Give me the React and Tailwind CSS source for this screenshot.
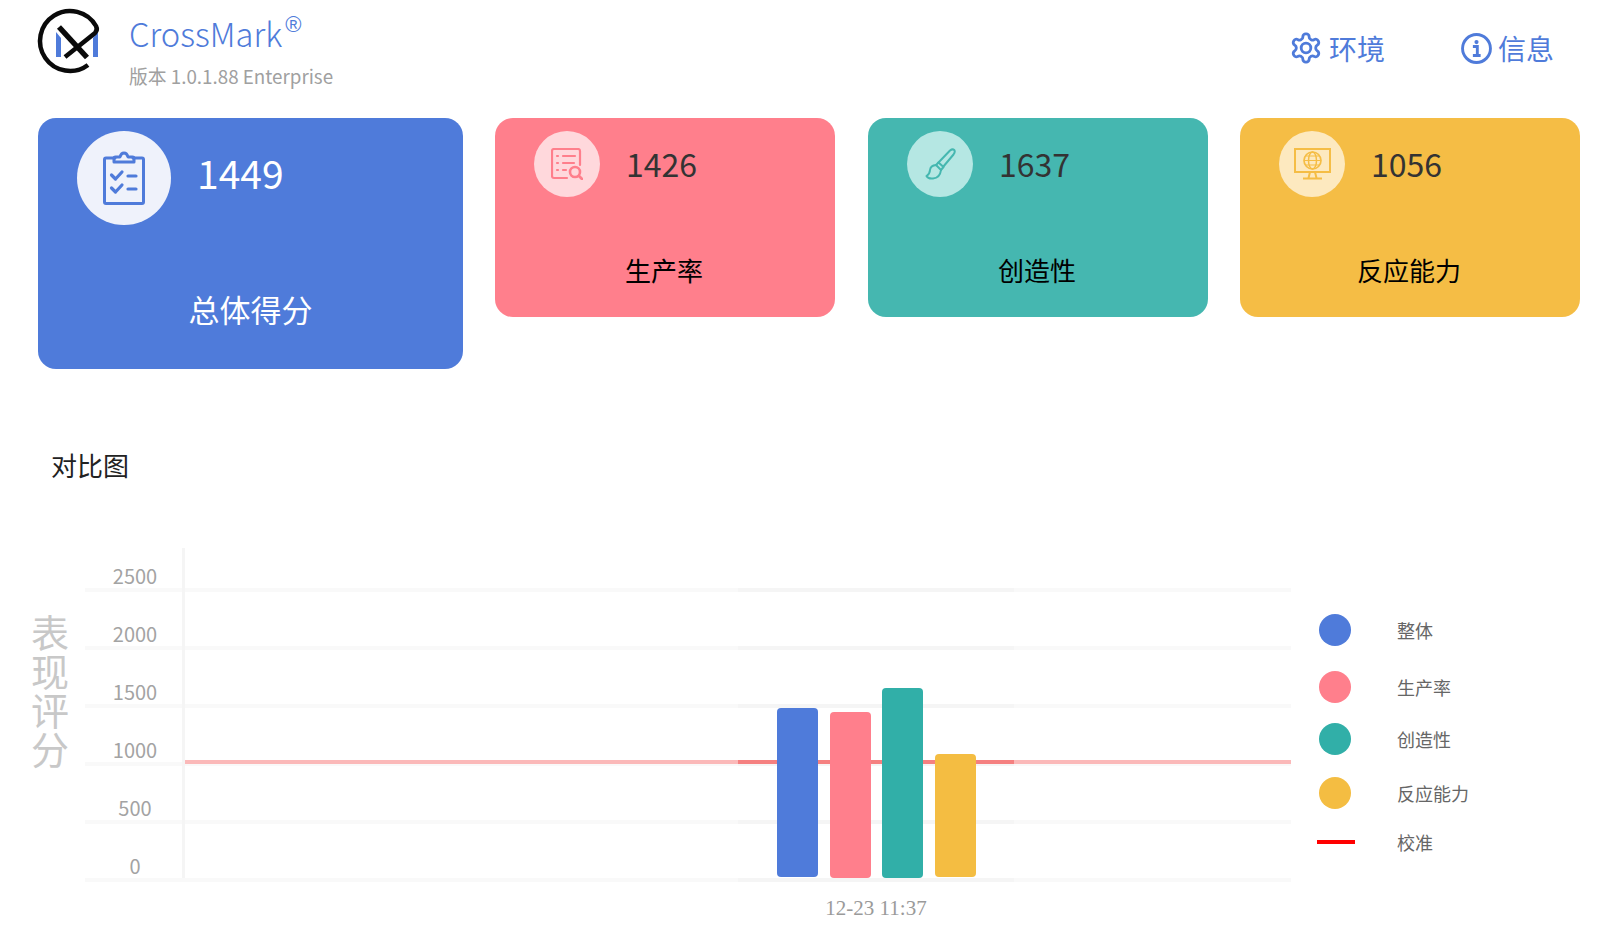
import React from "react";

const cjk = { fontFamily: '"Noto Sans CJK SC", "Noto Sans", sans-serif' };

function Logo() {
  return (
    <svg width="80" height="80" viewBox="30 0 80 80" className="shrink-0">
      <path d="M56 32 L61 38 V57 H56 Z" fill="#4f7bda" />
      <path d="M98 32 L93 38 V57 H98 Z" fill="#4f7bda" />
      <path d="M88 65 A30 30 0 1 1 96 26 Q98 30 95 33 L65 57" fill="none" stroke="#0a0a0a" strokeWidth="4.5" />
      <path d="M59 27 L87 57.5" fill="none" stroke="#0a0a0a" strokeWidth="5.5" />
    </svg>
  );
}

function Gear() {
  return (
    <svg width="34" height="34" viewBox="0 0 24 24" fill="none" stroke="#4f7bda" strokeWidth="2" strokeLinecap="round" strokeLinejoin="round">
      <path d="M12.22 2h-.44a2 2 0 0 0-2 2v.18a2 2 0 0 1-1 1.73l-.43.25a2 2 0 0 1-2 0l-.15-.08a2 2 0 0 0-2.73.73l-.22.38a2 2 0 0 0 .73 2.73l.15.1a2 2 0 0 1 1 1.72v.51a2 2 0 0 1-1 1.74l-.15.09a2 2 0 0 0-.73 2.73l.22.38a2 2 0 0 0 2.73.73l.15-.08a2 2 0 0 1 2 0l.43.25a2 2 0 0 1 1 1.73V20a2 2 0 0 0 2 2h.44a2 2 0 0 0 2-2v-.18a2 2 0 0 1 1-1.73l.43-.25a2 2 0 0 1 2 0l.15.08a2 2 0 0 0 2.73-.73l.22-.39a2 2 0 0 0-.73-2.73l-.15-.08a2 2 0 0 1-1-1.74v-.5a2 2 0 0 1 1-1.74l.15-.09a2 2 0 0 0 .73-2.73l-.22-.38a2 2 0 0 0-2.73-.73l-.15.08a2 2 0 0 1-2 0l-.43-.25a2 2 0 0 1-1-1.73V4a2 2 0 0 0-2-2z" />
      <circle cx="12" cy="12" r="3.4" />
    </svg>
  );
}

function InfoIcon() {
  return (
    <svg width="31" height="31" viewBox="0 0 30 30" fill="none" stroke="#4f7bda">
      <circle cx="15" cy="15" r="13.5" strokeWidth="2.8" />
      <circle cx="15" cy="8.8" r="2" fill="#4f7bda" stroke="none" />
      <path d="M11.5 13 H15.8 V21.5 M11.5 21.8 H19" strokeWidth="2.8" />
    </svg>
  );
}

function ClipboardIcon() {
  return (
    <svg width="42" height="54" viewBox="0 0 42 54" fill="none" stroke="#4f7bda" strokeWidth="3" strokeLinecap="round" strokeLinejoin="round">
      <path d="M12 7 H3 Q1.5 7 1.5 8.5 V51 Q1.5 52.5 3 52.5 H39 Q40.5 52.5 40.5 51 V8.5 Q40.5 7 39 7 H30" />
      <path d="M11 11 V7.5 Q11 6 12.5 6 H17 Q18 2 21 2 Q24 2 25 6 H29.5 Q31 6 31 7.5 V11 Z" />
      <path d="M8.5 24 L12.5 28 L19 21 M8.5 37 L12.5 41 L19 34" strokeWidth="3.2" />
      <path d="M25 25 H33 M25 38 H33" strokeWidth="3.2" />
    </svg>
  );
}

function ListSearchIcon() {
  return (
    <svg width="32" height="32" viewBox="0 0 32 32" fill="none" stroke="#ff7f8c" strokeWidth="2.2" strokeLinecap="round" strokeLinejoin="round">
      <path d="M16 30 H3 Q1 30 1 28 V3 Q1 1 3 1 H27 Q29 1 29 3 V17" />
      <path d="M6 8 H7 M6 15 H7 M6 22 H7 M12 8 H24 M12 15 H23 M12 22 H15" strokeWidth="2.2" />
      <circle cx="24" cy="24" r="5" strokeWidth="2.6" />
      <path d="M28 28 L31 31" strokeWidth="2.8" />
    </svg>
  );
}

function BrushIcon() {
  return (
    <svg width="31" height="32" viewBox="0 0 31 32" fill="none" stroke="#45b7b0" strokeWidth="2" strokeLinecap="round" strokeLinejoin="round">
      <path d="M13 15 L25 2.5 Q27.5 0.5 29.3 2 Q30.5 4 28.5 6.5 L18 19" />
      <path d="M11 17 L13.5 14.5 L18.5 19 L16 22" />
      <path d="M11 17 Q5.5 17.5 5 22 Q4.8 26 1.5 28 Q3 31 8 30.5 Q15 30 16 22 Z" />
    </svg>
  );
}

function MonitorIcon() {
  return (
    <svg width="37" height="32" viewBox="0 0 37 32" fill="none" stroke="#f5bd45" strokeWidth="2">
      <rect x="1" y="1" width="35" height="23" />
      <circle cx="18.5" cy="12.5" r="8.5" strokeWidth="1.7" />
      <ellipse cx="18.5" cy="12.5" rx="4" ry="8.5" strokeWidth="1.5" />
      <path d="M10 12.5 H27 M12 8 H25 M12 17 H25" strokeWidth="1.2" />
      <path d="M16 24 L14.5 30 M21 24 L22.5 30 M9 30.5 H28" />
    </svg>
  );
}

const smallCards = [
  { num: "1426", label: "生产率", bg: "bg-[#ff7f8c]", circle: "bg-[#ffd8dc]", icon: <ListSearchIcon />, gap: "ml-0" },
  { num: "1637", label: "创造性", bg: "bg-[#45b7b0]", circle: "bg-[#b5e7e3]", icon: <BrushIcon />, gap: "ml-[1px]" },
  { num: "1056", label: "反应能力", bg: "bg-[#f5bd45]", circle: "bg-[#fde9bf]", icon: <MonitorIcon />, gap: "ml-0" },
];

const legend = [
  { label: "整体", cls: "bg-[#4f7bda]", row: "mt-0" },
  { label: "生产率", cls: "bg-[#ff7f8c]", row: "mt-[25px]" },
  { label: "创造性", cls: "bg-[#31afa8]", row: "mt-[20px]" },
  { label: "反应能力", cls: "bg-[#f4bd42]", row: "mt-[22px]" },
];

function Chart() {
  const ticks = [
    { y: 590, t: "2500" },
    { y: 648, t: "2000" },
    { y: 706, t: "1500" },
    { y: 764, t: "1000" },
    { y: 822, t: "500" },
    { y: 880, t: "0" },
  ];
  const bars = [
    { x: 777, y: 708, h: 169, c: "#4f7bda" },
    { x: 830, y: 712, h: 166, c: "#ff7f8c" },
    { x: 882, y: 688, h: 190, c: "#31afa8" },
    { x: 935, y: 754, h: 123, c: "#f4bd42" },
  ];
  return (
    <svg width="1220" height="400" viewBox="80 540 1220 400" className="shrink-0" style={cjk}>
      {ticks.map((k) => (
        <g key={k.y}>
          <rect x="85" y={k.y - 2} width="1206" height="4" fill="#f9f9f9" />
          <rect x="738" y={k.y - 2} width="276" height="4" fill="#f5f5f5" />
          <text x="135" y={k.y - 6} textAnchor="middle" fontSize="20" fill="#a3a3a3">{k.t}</text>
        </g>
      ))}
      <rect x="182" y="548" width="3" height="330" fill="#f5f5f5" />
      <rect x="185" y="760" width="1106" height="4" fill="#fbb9b9" />
      <rect x="738" y="760" width="276" height="4" fill="#f58080" />
      {bars.map((b) => (
        <rect key={b.x} x={b.x} y={b.y} width="41" height={b.h} rx="4" fill={b.c} />
      ))}
      <text x="876" y="915" textAnchor="middle" fontSize="21" fontFamily='"Liberation Serif", serif' fill="#9a9a9a">12-23 11:37</text>
    </svg>
  );
}

export default function App() {
  return (
    <div className="w-[1618px] h-[947px] bg-white overflow-hidden" style={cjk}>
      <header className="flex items-start h-[118px] pl-[30px]">
        <Logo />
        <div className="ml-[19px] pt-[10px] flex flex-col">
          <div className="text-[32.7px] leading-[46px] text-[#4f7bda] font-light">CrossMark<sup className="font-['Liberation_Sans'] text-[22px] align-[4px] leading-none ml-[3px]">®</sup></div>
          <div className="text-[18.8px] leading-[28px] mt-[6px] text-[#a0a0a0]">版本 1.0.1.88 Enterprise</div>
        </div>
        <nav className="ml-auto mr-[64px] mt-[29px] flex items-center gap-[76px]">
          <div className="flex items-center gap-[6px] text-[28px] leading-[38px] text-[#4f7bda]"><Gear /><span>环境</span></div>
          <div className="flex items-center gap-[6px] text-[28px] leading-[38px] text-[#4f7bda]"><InfoIcon /><span>信息</span></div>
        </nav>
      </header>

      <section className="flex items-start gap-[32px] pl-[38px]">
        <div className="w-[425px] h-[251px] rounded-[18px] bg-[#4f7bda] pt-[13px] flex flex-col">
          <div className="flex items-center pl-[39px]">
            <div className="w-[94px] h-[94px] rounded-full bg-[#eff2fb] flex items-center justify-center"><ClipboardIcon /></div>
            <div className="ml-[26px] text-[39px] leading-[54px] text-white -mt-[12px]">1449</div>
          </div>
          <div className="mt-[62px] text-center text-[31px] leading-[44px] text-white">总体得分</div>
        </div>
        {smallCards.map((c) => (
          <div key={c.num} className={`w-[340px] h-[199px] rounded-[18px] ${c.bg} ${c.gap} pt-[13px] flex flex-col`}>
            <div className="flex items-center pl-[39px]">
              <div className={`w-[66px] h-[66px] rounded-full ${c.circle} flex items-center justify-center`}>{c.icon}</div>
              <div className="ml-[26px] text-[32px] leading-[46px] text-[#333] -mt-[2px]">{c.num}</div>
            </div>
            <div className="mt-[54px] pr-[2px] text-center text-[26px] leading-[38px] text-black">{c.label}</div>
          </div>
        ))}
      </section>

      <h2 className="mt-[77px] pl-[51px] text-[26px] leading-[38px] text-[#222]">对比图</h2>

      <section className="flex items-start pt-[56px]">
        <div className="w-[80px] pl-[31px] pt-[71px]">
          <div className="w-[38px] break-all text-[38px] leading-[39px] text-[#c8c8c8]">表现评分</div>
        </div>
        <Chart />
        <div className="pl-[17px] pt-[74px] flex flex-col">
          {legend.map((l) => (
            <div key={l.label} className={`flex items-center ${l.row}`}>
              <div className="w-[38px] flex justify-start pl-[2px]"><div className={`w-[32px] h-[32px] rounded-full ${l.cls}`} /></div>
              <span className="ml-[42px] text-[18px] leading-[26px] text-[#666]">{l.label}</span>
            </div>
          ))}
          <div className="flex items-center mt-[20px]">
            <div className="w-[38px] h-[4px] bg-[#ff0000]" />
            <span className="ml-[42px] text-[18px] leading-[26px] text-[#666]">校准</span>
          </div>
        </div>
      </section>
    </div>
  );
}
